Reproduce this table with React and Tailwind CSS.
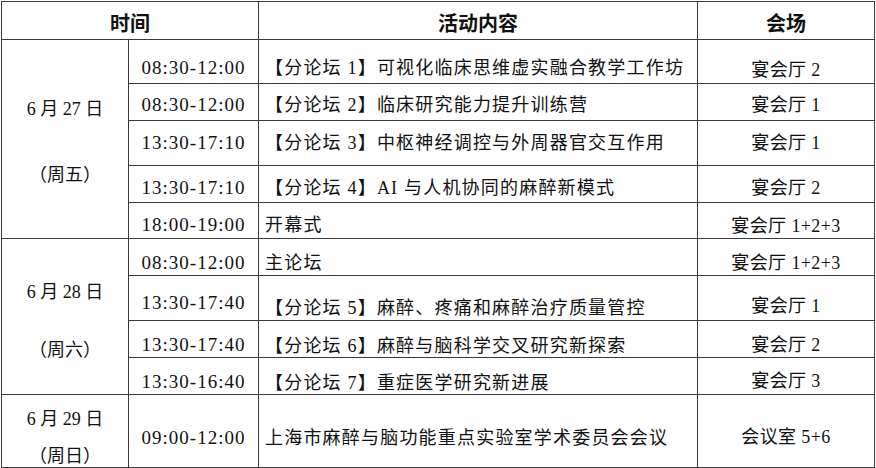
import React from 'react'

const rows = [
    { time: '08:30-12:00', title: '【分论坛 1】可视化临床思维虚实融合教学工作坊', room: '宴会厅 2', h: 'h-[44px]', pt: ['pt-[12px]', 'pt-[12px]', 'pt-[16px]'] },
    { time: '08:30-12:00', title: '【分论坛 2】临床研究能力提升训练营', room: '宴会厅 1', h: 'h-[37px]', pt: ['pt-[5px]', 'pt-[5px]', 'pt-[5px]'] },
    { time: '13:30-17:10', title: '【分论坛 3】中枢神经调控与外周器官交互作用', room: '宴会厅 1', h: 'h-[45px]', pt: ['pt-0', 'pt-0', 'pt-0'] },
    { time: '13:30-17:10', title: '【分论坛 4】AI 与人机协同的麻醉新模式', room: '宴会厅 2', h: 'h-[37px]', pt: ['pt-[7px]', 'pt-[7px]', 'pt-[7px]'] },
    { time: '18:00-19:00', title: '开幕式', room: '宴会厅 1+2+3', h: 'h-[36px]', pt: ['pt-[8px]', 'pt-[8px]', 'pt-[10px]'] },
    { time: '08:30-12:00', title: '主论坛', room: '宴会厅 1+2+3', h: 'h-[37px]', pt: ['pt-[12px]', 'pt-[12px]', 'pt-[12px]'] },
    { time: '13:30-17:40', title: '【分论坛 5】麻醉、疼痛和麻醉治疗质量管控', room: '宴会厅 1', h: 'h-[45px]', pt: ['pt-[9px]', 'pt-[20px]', 'pt-[16px]'] },
    { time: '13:30-17:40', title: '【分论坛 6】麻醉与脑科学交叉研究新探索', room: '宴会厅 2', h: 'h-[37px]', pt: ['pt-[11px]', 'pt-[13px]', 'pt-[11px]'] },
    { time: '13:30-16:40', title: '【分论坛 7】重症医学研究新进展', room: '宴会厅 3', h: 'h-[37px]', pt: ['pt-[11px]', 'pt-[13px]', 'pt-[10px]'] },
    { time: '09:00-12:00', title: '上海市麻醉与脑功能重点实验室学术委员会会议', room: '会议室 5+6', h: 'h-[72px]', pt: ['pt-[13px]', 'pt-[14px]', 'pt-[11px]'] },
]

// date blocks keyed by first row index
const days = {
    0: { span: 5, date: '6 月 27 日', week: '（周五）', gap: 'gap-[44px]', pt: 'pt-[5px]' },
    5: { span: 4, date: '6 月 28 日', week: '（周六）', gap: 'gap-[36px]', pt: 'pt-[8px]' },
    9: { span: 1, date: '6 月 29 日', week: '（周日）', gap: 'gap-[15px]', pt: 'pt-[13px]' },
}

const cell = 'border border-[#3a3a3a] align-middle p-0 leading-[22px]'

function App() {
    return (
        <div className="w-[876px] h-[468px] bg-white pt-px pl-px text-[#111]" style={{ fontFamily: '"Liberation Serif", "Noto Sans CJK SC", serif' }}>
            <table className="table-fixed border-collapse w-[873px] text-[18px]">
                <colgroup>
                    <col className="w-[127px]" />
                    <col className="w-[130px]" />
                    <col className="w-[439px]" />
                    <col className="w-[177px]" />
                </colgroup>
                <thead>
                    <tr>
                        <th colSpan={2} className={cell + ' h-[38px] pt-[6px] text-[20px] font-bold text-center'}>时间</th>
                        <th className={cell + ' h-[38px] pt-[6px] text-[20px] font-bold text-center'}>活动内容</th>
                        <th className={cell + ' h-[38px] pt-[6px] text-[20px] font-bold text-center'}>会场</th>
                    </tr>
                </thead>
                <tbody>
                    {
                        rows.map((r, i) => {
                            const d = days[i]
                            return <tr key={i}>
                                {d &&
                                    <td rowSpan={d.span} className={cell + ' ' + d.pt}>
                                        <div className={'flex flex-col items-center ' + d.gap}>
                                            <span>{d.date}</span>
                                            <span>{d.week}</span>
                                        </div>
                                    </td>
                                }
                                <td className={cell + ' ' + r.h + ' ' + r.pt[0] + ' text-center text-[19px] tracking-[1px]'}>{r.time}</td>
                                <td className={cell + ' ' + r.h + ' ' + r.pt[1] + ' pl-[6px] tracking-[1.2px] whitespace-nowrap'}>{r.title}</td>
                                <td className={cell + ' ' + r.h + ' ' + r.pt[2] + ' text-center tracking-[0.4px]'}>{r.room}</td>
                            </tr>
                        })
                    }
                </tbody>
            </table>
        </div>
    )
}

export default App
